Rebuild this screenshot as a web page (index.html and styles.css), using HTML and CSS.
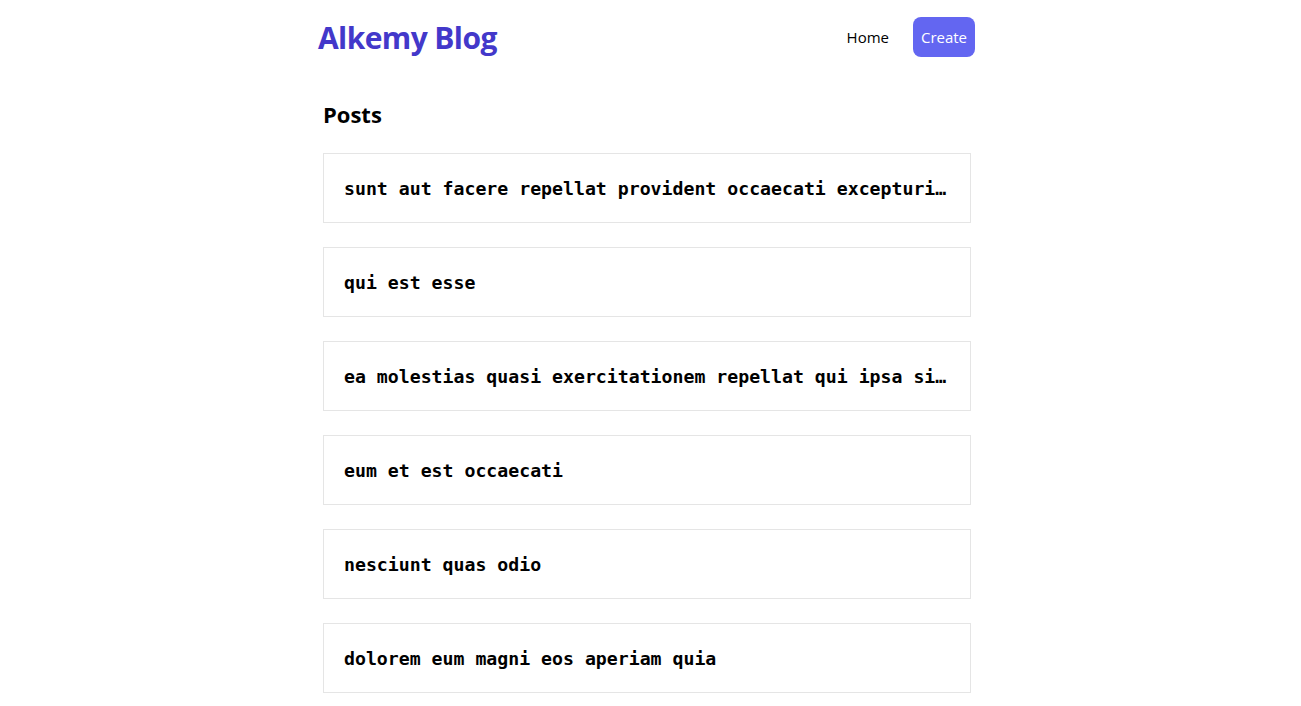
FILE: index.html
```html
<!DOCTYPE html>
<html lang="en">
<head>
<meta charset="utf-8">
<title>Alkemy Blog</title>
<link rel="stylesheet" href="styles.css">
</head>
<body>
<div class="page">
  <header class="header">
    <h1 class="brand">Alkemy Blog</h1>
    <nav class="nav">
      <a class="nav-link" href="#">Home</a>
      <a class="nav-btn" href="#">Create</a>
    </nav>
  </header>
  <main class="main">
    <h2 class="title">Posts</h2>
    <ul class="posts">
      <li class="post">sunt aut facere repellat provident occaecati excepturi optio reprehenderit</li>
      <li class="post">qui est esse</li>
      <li class="post">ea molestias quasi exercitationem repellat qui ipsa sit aut</li>
      <li class="post">eum et est occaecati</li>
      <li class="post">nesciunt quas odio</li>
      <li class="post">dolorem eum magni eos aperiam quia</li>
      <li class="post">magnam facilis autem</li>
    </ul>
  </main>
</div>
</body>
</html>
```

FILE: styles.css
```css
html, body {
  margin: 0;
  padding: 0;
  background: #fff;
}
body {
  font-family: "Open Sans", "Noto Sans", sans-serif;
  color: #000;
  padding-right: 7px;
}
.page {
  width: 660px;
  margin: 0 auto;
}
.header {
  display: flex;
  align-items: center;
  justify-content: space-between;
  height: 40px;
  padding: 17px 2px 0 0;
}
.brand {
  margin: 0 0 0 1px;
  font-size: 30px;
  font-weight: 700;
  color: #4338ca;
  letter-spacing: -0.6px;
}
.nav {
  display: flex;
  align-items: center;
  gap: 24px;
}
.nav-link {
  color: #000;
  text-decoration: none;
  font-size: 15px;
}
.nav-btn {
  display: flex;
  align-items: center;
  justify-content: center;
  width: 62px;
  height: 40px;
  border-radius: 8px;
  background: #6366f1;
  color: #fff;
  text-decoration: none;
  font-size: 15px;
}
.main {
  padding: 0 6px;
}
.title {
  margin: 42px 0 24px;
  font-size: 22px;
  font-weight: 700;
  line-height: 30px;
}
.posts {
  list-style: none;
  margin: 0;
  padding: 0;
  display: flex;
  flex-direction: column;
  gap: 24px;
}
.post {
  border: 1px solid #e5e5e5;
  padding: 21px 20px 19px;
  line-height: 28px;
  font-family: "DejaVu Sans Mono", "Liberation Mono", monospace;
  font-weight: 700;
  font-size: 18.2px;
  white-space: nowrap;
  overflow: hidden;
  text-overflow: ellipsis;
}
```
